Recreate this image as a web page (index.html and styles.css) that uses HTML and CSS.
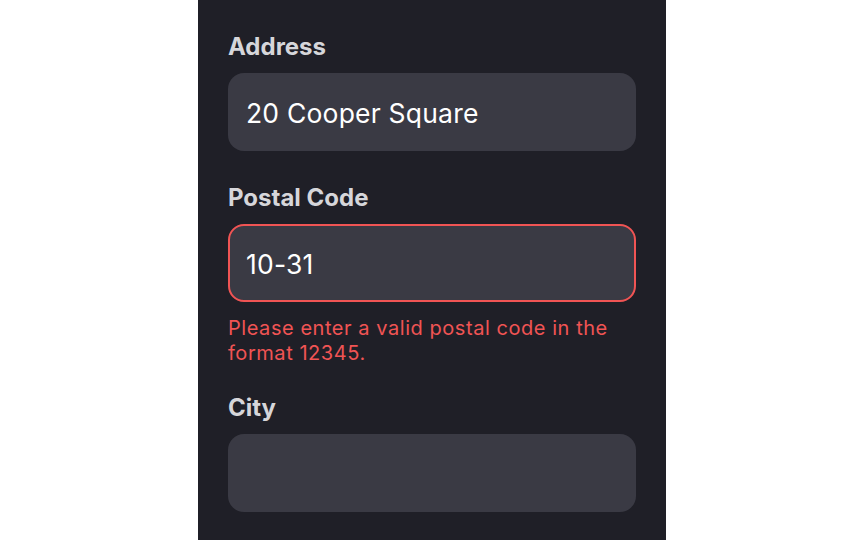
FILE: index.html
```html
<!DOCTYPE html>
<html lang="en">
<head>
<meta charset="utf-8">
<title>Address form</title>
<link rel="stylesheet" href="styles.css">
</head>
<body>
<main class="panel">
  <div class="field">
    <label class="label" for="address">Address</label>
    <div class="input" id="address">20 Cooper Square</div>
  </div>
  <div class="field">
    <label class="label" for="postal">Postal Code</label>
    <div class="input input-error" id="postal">10-31</div>
    <p class="error">Please enter a valid postal code in the format 12345.</p>
  </div>
  <div class="field field-after-error">
    <label class="label" for="city">City</label>
    <div class="input" id="city"></div>
  </div>
</main>
</body>
</html>
```

FILE: styles.css
```css
html, body {
  margin: 0;
  padding: 0;
  background: #ffffff;
  height: 100%;
}

body {
  display: flex;
  justify-content: center;
  font-family: Inter, "Noto Sans", sans-serif;
}

.panel {
  width: 468px;
  min-height: 540px;
  box-sizing: border-box;
  background: #1f1f27;
  padding: 31px 30px 0;
}

.field {
  display: flex;
  flex-direction: column;
  margin-bottom: 31px;
}

.field:has(.error) {
  margin-bottom: 0;
}

.field-after-error {
  margin-top: 26px;
}

.label {
  font-size: 24px;
  line-height: 32px;
  font-weight: 700;
  color: #d6d6da;
  margin-bottom: 10px;
}

.input {
  height: 78px;
  box-sizing: border-box;
  border: 2px solid transparent;
  border-radius: 16px;
  background: #3a3a44;
  padding: 2px 16px 0;
  display: flex;
  align-items: center;
  font-size: 26.5px;
  letter-spacing: 0.2px;
  color: #ffffff;
}

.input-error {
  border-color: #f05454;
}

.error {
  margin: 14px 0 0;
  font-size: 20px;
  line-height: 25px;
  letter-spacing: 0.55px;
  color: #f05454;
}
```
